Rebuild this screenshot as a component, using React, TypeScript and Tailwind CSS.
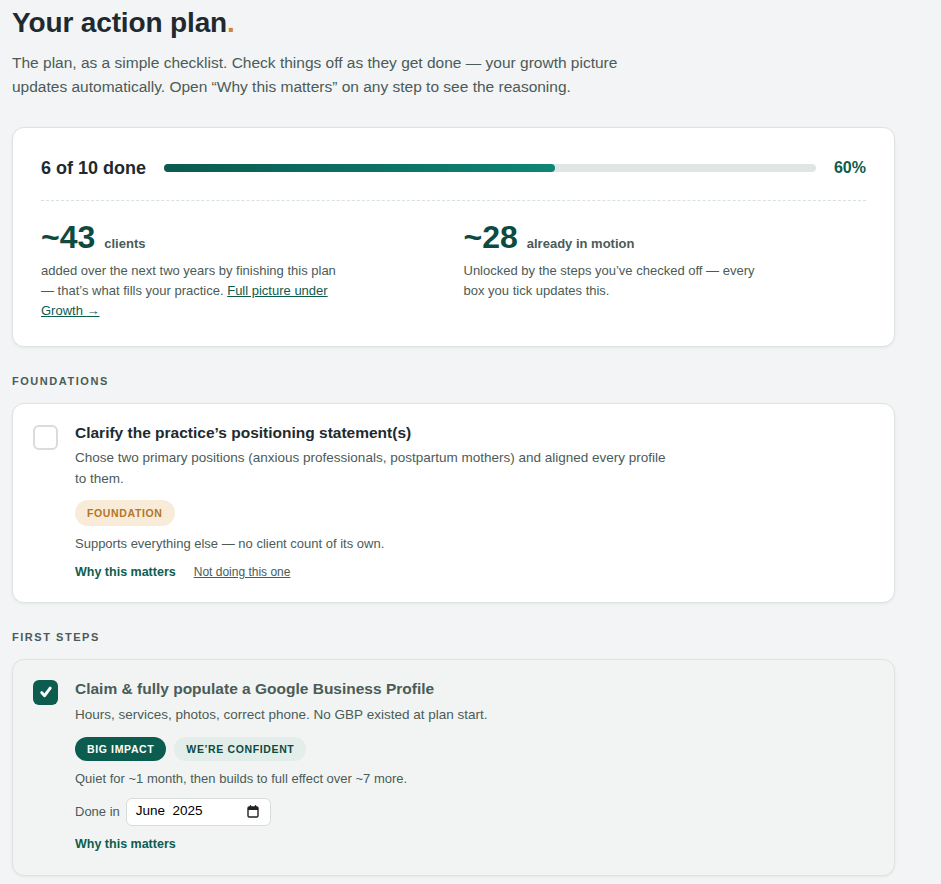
const font = { fontFamily: '"Liberation Sans", Arial, sans-serif' };

type Step = {
  title: string;
  desc: string;
  done: boolean;
};

const Checkbox = ({ checked }: { checked: boolean }) =>
  checked ? (
    <div className="flex h-[25px] w-[25px] shrink-0 items-center justify-center rounded-[6px] bg-[#0d5c50]">
      <svg width="14" height="14" viewBox="0 0 16 16" fill="none">
        <path
          d="M3.2 8.8l3.2 3.4L12.8 3.6"
          stroke="white"
          strokeWidth="3.4"
          strokeLinecap="round"
          strokeLinejoin="round"
        />
      </svg>
    </div>
  ) : (
    <div className="h-[25px] w-[25px] shrink-0 rounded-[6px] border-2 border-[#d6dddb] bg-white" />
  );

const SectionLabel = ({ children }: { children: string }) => (
  <div className="mt-[27px] mb-[15px] text-[11px] leading-[14px] font-bold tracking-[0.14em] text-[#4b5b57]">
    {children}
  </div>
);

const CalendarIcon = () => (
  <svg width="12" height="13" viewBox="0 0 12 13" fill="none">
    <rect x="1" y="2" width="10" height="10" rx="1.2" stroke="#222" strokeWidth="1.4" />
    <rect x="1" y="2" width="10" height="3" fill="#222" />
    <path d="M3.5 0.8v2M8.5 0.8v2" stroke="#222" strokeWidth="1.4" strokeLinecap="round" />
  </svg>
);

export default function App() {
  const doneCount = 6;
  const total = 10;
  const pct = Math.round((doneCount / total) * 100);

  const foundation: Step = {
    title: "Clarify the practice’s positioning statement(s)",
    desc: "Chose two primary positions (anxious professionals, postpartum mothers) and aligned every profile to them.",
    done: false,
  };
  const gbp: Step = {
    title: "Claim & fully populate a Google Business Profile",
    desc: "Hours, services, photos, correct phone. No GBP existed at plan start.",
    done: true,
  };

  return (
    <div className="min-h-screen bg-[#f3f4f6] px-3 pt-[6px] pb-10" style={font}>
      <div className="max-w-[883px]">
        <h1 className="text-[28px] leading-[34px] font-bold tracking-[-0.005em] text-[#1e2a2f]">
          Your action plan<span className="text-[#d4842a]">.</span>
        </h1>
        <p className="mt-[11px] max-w-[620px] text-[15.5px] leading-[24px] text-[#4b5b57]">
          The plan, as a simple checklist. Check things off as they get done — your growth picture
          updates automatically. Open “Why this matters” on any step to see the reasoning.
        </p>

        {/* progress summary */}
        <div className="mt-[28px] rounded-[12px] border border-[#dde3e1] bg-white px-7 pt-7 pb-[25px] shadow-[0_1px_3px_rgba(0,0,0,0.06)]">
          <div className="flex h-6 items-center gap-[18px]">
            <div className="text-[18px] font-bold text-[#1e2a2f]">
              {doneCount} of {total} done
            </div>
            <div className="h-2 flex-1 rounded-full bg-[#dfe7e4]">
              <div
                className="h-2 rounded-full bg-gradient-to-r from-[#0a5a50] to-[#0e8676]"
                style={{ width: `${pct}%` }}
              />
            </div>
            <div className="text-[16px] font-bold text-[#0d5c50]">{pct}%</div>
          </div>
          <div className="mt-5 border-t border-dashed border-[#d6e2de]" />
          <div className="grid grid-cols-2 gap-5 pt-[21px]">
            <div>
              <div className="flex items-baseline gap-[9px]">
                <span className="text-[32px] leading-[31px] font-bold text-[#0d4a40]">~43</span>
                <span className="text-[13px] font-bold text-[#4b5b57]">clients</span>
              </div>
              <p className="mt-[7px] max-w-[300px] text-[13px] leading-[20px] text-[#4b5b57]">
                added over the next two years by finishing this plan — that’s what fills your
                practice.{" "}
                <a href="#" className="text-[#0d5c50] underline">
                  Full picture under Growth →
                </a>
              </p>
            </div>
            <div>
              <div className="flex items-baseline gap-[9px]">
                <span className="text-[32px] leading-[31px] font-bold text-[#0d4a40]">~28</span>
                <span className="text-[13px] font-bold text-[#4b5b57]">already in motion</span>
              </div>
              <p className="mt-[7px] max-w-[300px] text-[13px] leading-[20px] text-[#4b5b57]">
                Unlocked by the steps you’ve checked off — every box you tick updates this.
              </p>
            </div>
          </div>
        </div>

        <SectionLabel>FOUNDATIONS</SectionLabel>
        <div className="flex gap-[17px] rounded-[12px] border border-[#dde3e1] bg-white px-5 pt-[21px] pb-5 shadow-[0_1px_3px_rgba(0,0,0,0.06)]">
          <Checkbox checked={foundation.done} />
          <div className="-mt-[2px] flex-1">
            <div className="text-[15.5px] leading-[20px] font-bold text-[#1e2a2f]">{foundation.title}</div>
            <p className="mt-[4px] max-w-[600px] text-[13.5px] leading-[21px] text-[#4b5b57]">
              {foundation.desc}
            </p>
            <div className="mt-[11px] flex">
              <span className="rounded-full bg-[#f8ebd8] px-3 py-[6px] text-[10.5px] leading-[14px] font-bold tracking-[0.06em] text-[#b47628]">
                FOUNDATION
              </span>
            </div>
            <p className="mt-2 text-[13px] leading-[20px] text-[#4b5b57]">
              Supports everything else — no client count of its own.
            </p>
            <div className="mt-2 flex items-center gap-[18px] leading-[20px]">
              <button className="text-[12.5px] font-bold text-[#0d5c50]">Why this matters</button>
              <button className="text-[12px] text-[#4b5b57] underline">Not doing this one</button>
            </div>
          </div>
        </div>

        <SectionLabel>FIRST STEPS</SectionLabel>
        <div className="flex gap-[17px] rounded-[12px] border border-[#dde3e1] bg-[#f1f4f3] px-5 pt-5 pb-5 shadow-[0_1px_3px_rgba(0,0,0,0.06)]">
          <Checkbox checked={gbp.done} />
          <div className="-mt-[1px] flex-1">
            <div className="text-[15.5px] leading-[20px] font-bold text-[#4b5b57]">{gbp.title}</div>
            <p className="mt-[5px] text-[13.5px] leading-[21px] text-[#4b5b57]">{gbp.desc}</p>
            <div className="mt-3 flex gap-2">
              <span className="rounded-full bg-[#0d5c50] px-3 py-[5px] text-[10.5px] leading-[14px] font-bold tracking-[0.06em] text-white">
                BIG IMPACT
              </span>
              <span className="rounded-full bg-[#e3eeeb] px-3 py-[5px] text-[10.5px] leading-[14px] font-bold tracking-[0.06em] text-[#0d4a40]">
                WE’RE CONFIDENT
              </span>
            </div>
            <p className="mt-2 text-[13px] leading-[20px] text-[#4b5b57]">
              Quiet for ~1 month, then builds to full effect over ~7 more.
            </p>
            <div className="mt-[9px] flex items-center gap-[6px]">
              <span className="text-[13px] text-[#4b5b57]">Done in</span>
              <div className="flex h-[28px] w-[145px] items-center justify-between rounded-[6px] border border-[#d6dddb] bg-white pr-[11px] pl-[9px]">
                <span className="text-[13.5px] whitespace-pre text-black">June  2025</span>
                <CalendarIcon />
              </div>
            </div>
            <button className="mt-2 text-[12.5px] leading-[20px] font-bold text-[#0d5c50]">
              Why this matters
            </button>
          </div>
        </div>
      </div>
    </div>
  );
}
